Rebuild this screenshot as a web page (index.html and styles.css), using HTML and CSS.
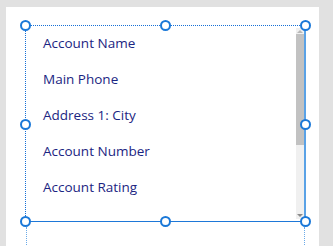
FILE: index.html
```html
<!DOCTYPE html>
<html>
<head>
<meta charset="utf-8">
<link rel="stylesheet" href="styles.css">
</head>
<body>
<div class="panel">
  <div class="control">
    <ul class="list">
      <li>Account Name</li>
      <li>Main Phone</li>
      <li>Address 1: City</li>
      <li>Account Number</li>
      <li>Account Rating</li>
    </ul>
    <div class="scrollbar">
      <div class="arrow up"></div>
      <div class="track"><div class="thumb"></div></div>
      <div class="arrow down"></div>
    </div>
    <div class="guide g-left"></div>
    <div class="guide g-right"></div>
    <span class="handle h-tl"></span>
    <span class="handle h-tc"></span>
    <span class="handle h-tr"></span>
    <span class="handle h-ml"></span>
    <span class="handle h-mr"></span>
    <span class="handle h-bl"></span>
    <span class="handle h-bc"></span>
    <span class="handle h-br"></span>
  </div>
</div>
</body>
</html>
```

FILE: styles.css
```css
html, body {
  margin: 0;
  padding: 0;
  height: 100%;
  overflow: hidden;
}
body {
  background: #e1e1e1;
  font-family: "Open Sans", "Noto Sans", sans-serif;
}
.panel {
  margin: 7px 0 0 6px;
  width: 313px;
  height: 239px;
  background: #ffffff;
  padding: 18px 0 0 19px;
  box-sizing: border-box;
}
.control {
  position: relative;
  width: 281px;
  height: 197px;
  box-sizing: border-box;
  border-top: 1px dotted #1670d6;
  border-left: 1px dotted #1670d6;
  border-bottom: 1.5px solid #1e78d8;
  border-right: 2px solid #5aa2e6;
  display: flex;
}
.list {
  list-style: none;
  margin: -1px 0 0 0;
  padding: 0 0 0 17px;
  flex: 1;
}
.list li {
  height: 36px;
  line-height: 36px;
  font-size: 13.5px;
  color: #1b2582;
  white-space: nowrap;
}
.scrollbar {
  width: 8px;
  margin: 2px 0 2px 0;
  display: flex;
  flex-direction: column;
  background: #f0f0f0;
}
.arrow {
  height: 6px;
  position: relative;
}
.arrow.up::after, .arrow.down::after {
  content: "";
  position: absolute;
  left: 1px;
  border-left: 3px solid transparent;
  border-right: 3px solid transparent;
}
.arrow.up::after {
  top: 2px;
  border-bottom: 3px solid #b8b8b8;
}
.arrow.down::after {
  top: 1px;
  border-top: 3px solid #8a8a8a;
}
.track {
  flex: 1;
}
.thumb {
  height: 111px;
  background: #c2c2c2;
}
.guide {
  position: absolute;
  top: 201px;
  height: 20px;
  border-left: 1px dotted #6aaae8;
}
.g-left { left: 0px; }
.g-right { right: -1px; }
.handle {
  position: absolute;
  width: 7px;
  height: 7px;
  border: 2px solid #1a78d8;
  border-radius: 50%;
  background: #ffffff;
}
.h-tl { left: -6px; top: -6px; }
.h-tc { left: 134px; top: -6px; }
.h-tr { right: -7px; top: -6px; }
.h-ml { left: -6px; top: 93px; }
.h-mr { right: -7px; top: 93px; }
.h-bl { left: -6px; bottom: -6px; }
.h-bc { left: 134px; bottom: -6px; }
.h-br { right: -7px; bottom: -6px; }
```
